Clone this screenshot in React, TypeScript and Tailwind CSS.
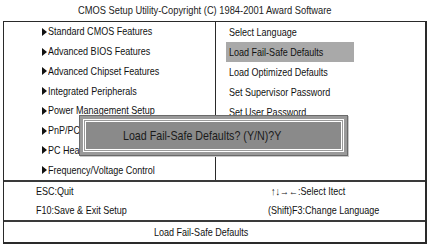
const FONT = "font-['Liberation_Sans',Arial,sans-serif]"

const leftItems = [
  'Standard CMOS Features',
  'Advanced BIOS Features',
  'Advanced Chipset Features',
  'Integrated Peripherals',
  'Power Management Setup',
  'PnP/PCI Configurations',
  'PC Health Status',
  'Frequency/Voltage Control',
]

const rightItems = [
  'Select Language',
  'Load Fail-Safe Defaults',
  'Load Optimized Defaults',
  'Set Supervisor Password',
  'Set User Password',
]

// Arial Narrow look: squeeze Liberation Sans horizontally
function N({ children }: { children: React.ReactNode }) {
  return <span className="inline-block whitespace-nowrap scale-x-[0.82] origin-left">{children}</span>
}

function Arrow() {
  return (
    <svg width="5" height="8" viewBox="0 0 5 8" className="mr-[1px] shrink-0">
      <path d="M0 0 L5 4 L0 8 Z" fill="#111" />
    </svg>
  )
}

export default function App() {
  return (
    <div className={`relative w-[429px] h-[249px] bg-white text-[#111] ${FONT} text-[11px] leading-none overflow-hidden`}>
      {/* Title */}
      <div className="h-[21px] flex items-center pl-[78px] text-[11.5px] text-[#222]">
        <span className="inline-block whitespace-nowrap scale-x-[0.81] origin-left">
          CMOS Setup Utility-Copyright (C) 1984-2001 Award Software
        </span>
      </div>

      {/* Main box */}
      <div className="ml-[3px] w-[424px] h-[223px] border-t border-l border-r-2 border-b-2 border-[#2a2a2a] flex flex-col">
        <div className="flex h-[158px]">
          <div className="w-[212px] border-r border-[#2a2a2a] pl-[38px] flex flex-col">
            {leftItems.map((t) => (
              <div key={t} className="h-[20px] flex items-center">
                <Arrow />
                <N>{t}</N>
              </div>
            ))}
          </div>
          <div className="flex-1 pl-[10px] flex flex-col">
            {rightItems.map((t, i) => (
              <div
                key={t}
                className={`h-[20px] w-[128px] flex items-center pl-[3px] ${i === 1 ? 'bg-[#a9a9a9]' : ''}`}
              >
                <N>{t}</N>
              </div>
            ))}
          </div>
        </div>

        {/* Key help */}
        <div className="border-t-2 border-[#3a3a3a] flex h-[40px]">
          <div className="w-[213px] pl-[32px] flex flex-col">
            <div className="h-[20px] flex items-center"><N>ESC:Quit</N></div>
            <div className="h-[20px] flex items-center"><N>F10:Save &amp; Exit Setup</N></div>
          </div>
          <div className="flex-1 pl-[51px] flex flex-col">
            <div className="h-[20px] flex items-center pl-[3px]"><N>↑↓→←:Select Itect</N></div>
            <div className="h-[20px] flex items-center"><N>(Shift)F3:Change Language</N></div>
          </div>
        </div>

        {/* Status line */}
        <div className="border-t-2 border-[#3a3a3a] flex-1 flex items-center pl-[150px]">
          <N>Load Fail-Safe Defaults</N>
        </div>
      </div>

      {/* Confirm dialog */}
      <div className="absolute left-[79px] top-[115px] w-[269px] h-[41px] bg-[#9a9a9a] border border-[#6a6a6a] p-[3px] shadow-[1px_1px_0_#c8c8c8]">
        <div className="w-full h-full border border-white p-[1px]">
          <div className="w-full h-full border border-white bg-[#8a8a8a] flex items-center pl-[37px] text-[13.5px] text-[#1a1a1a]">
            <span className="inline-block whitespace-nowrap scale-x-[0.79] origin-left">
              Load Fail-Safe Defaults? (Y/N)?Y
            </span>
          </div>
        </div>
      </div>
    </div>
  )
}
